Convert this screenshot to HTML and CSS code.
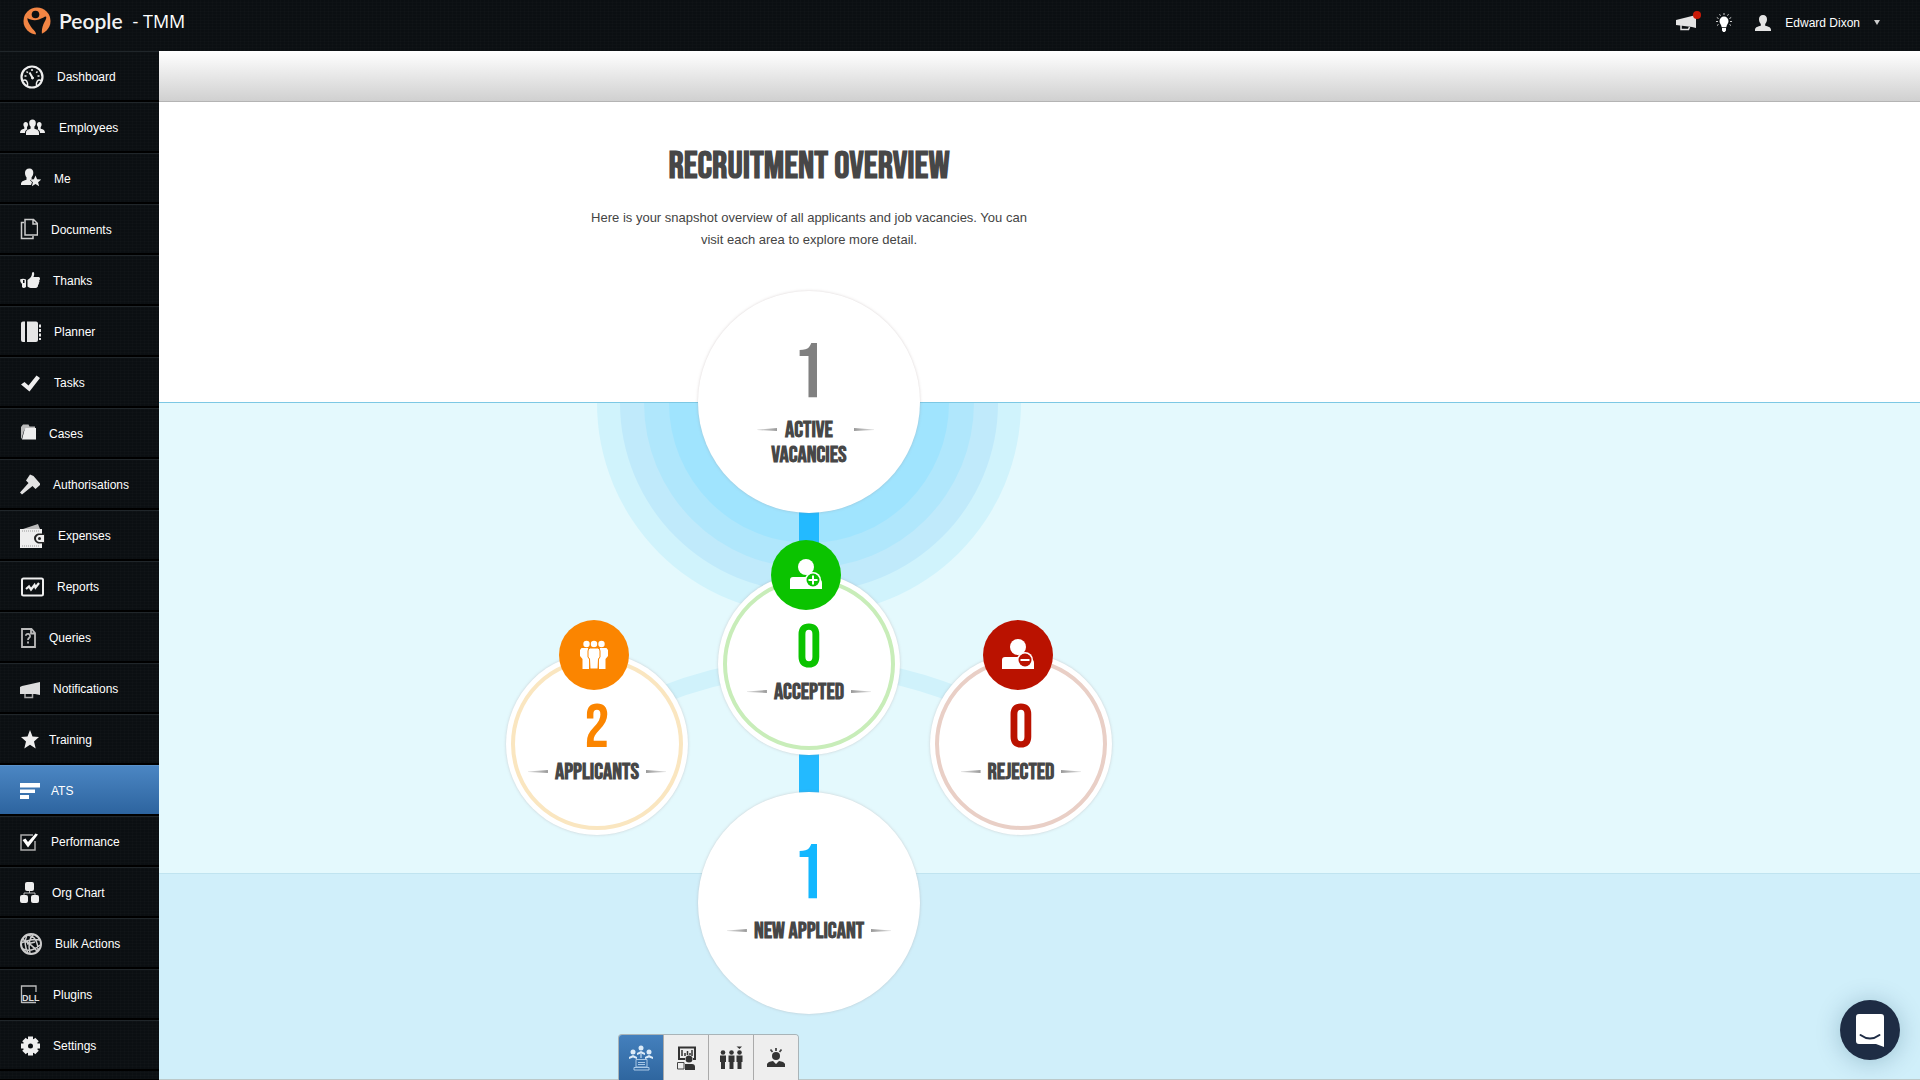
FILE: index.html
```html
<!DOCTYPE html>
<html lang="en">
<head>
    <meta charset="UTF-8">
    <meta name="viewport" content="width=device-width, initial-scale=1.0">
    <title>Recruitment Overview</title>
    <link rel="stylesheet" href="styles.css">
</head>
<body>

    <header class="topbar">
        <a class="brand" href="#">
            <svg width="28" height="28" viewBox="0 0 28 28"><circle cx="14" cy="14" r="13.5" fill="#f28544"/><circle cx="12.5" cy="7.5" r="3.8" fill="#0c1013"/><path d="M4.500 11C7 13 12 14 16 12.500C19 11.500 21.500 9.500 23 9.500C24 11 22 14 20.500 17C19 20.500 18.500 24 19 28H13C13.500 24.500 9.500 22.500 7.500 19C6 16 4 14 4.500 11Z" fill="#0c1013"/></svg>
            <span class="brand-name">People</span>
            <span class="brand-company">- TMM</span>
        </a>
        <div class="user-menu">
            <button class="icon-button" aria-label="Announcements">
                <svg width="20" height="18" viewBox="0 0 20 18" fill="#e4e4e4"><path d="M0 6L18 1.500L20 1V14L16 13L0 11Z"/><path d="M5 11V15.500H12.500L13.500 13" fill="none" stroke="#e4e4e4" stroke-width="1.500"/></svg>
                <span class="alert-dot"></span>
            </button>
            <button class="icon-button bulb" aria-label="Tips">
                <svg width="16" height="20" viewBox="0 0 16 20" fill="#fff"><path d="M8 3.500a4.500 4.500 0 0 1 4.500 4.700c0 2.300-1.800 3.200-2.200 6H5.700c-.4-2.800-2.200-3.700-2.200-6A4.500 4.500 0 0 1 8 3.500ZM6 15h4v2.500L8.800 19H7.200L6 17.500Z"/><path d="M8 0v2M3.500 1.200l1 1.500M12.500 1.200l-1 1.500M.8 4.500l1.800 1M15.200 4.500l-1.800 1M0 8.500h2M14 8.500h2M1 12.500l1.500-1M15 12.500l-1.500-1" stroke="#ccc" stroke-width="1"/></svg>
            </button>
            <button class="account">
                <svg width="16" height="16" viewBox="0 0 16 16" fill="#e4e4e4"><path d="M8 0c2.600 0 4 1.800 4 4.300 0 2-.8 3.800-1.800 4.700v1.800c2.800.8 5.800 1.500 5.800 4V16H0v-1.200c0-2.500 3-3.200 5.800-4V9C4.800 8.100 4 6.300 4 4.300 4 1.800 5.400 0 8 0Z"/></svg>
                Edward Dixon
                <svg class="caret" width="6" height="5" viewBox="0 0 6 5"><path d="M0 0H6L3 5Z" fill="#ccc"/></svg>
            </button>
        </div>
    </header>

    <div class="layout">
        <nav class="sidebar">
            <a href="#"><svg width="24" height="24" viewBox="0 0 24 24" fill="none" stroke="#eee"><circle cx="12" cy="12" r="10.500" stroke-width="2.200"/><path d="M3 15.500C6 14 8.500 17 7.500 21.500M21 15.500C18 14 15.500 17 16.500 21.500" stroke-width="1.500"/><path d="M4.500 11h2M17.500 11h2M6.500 6.500l1.300 1.300M17.500 6.500l-1.300 1.300M12 4v2" stroke-width="1.500"/><path d="M9.500 7.500L13 13.500" stroke-width="2"/><circle cx="12.500" cy="13" r="1" fill="#eee"/></svg>Dashboard</a>
            <a href="#"><svg width="26" height="24" viewBox="0 0 26 24" fill="#eee"><path d="M12.500 3.500c2.200 0 3.300 1.400 3.300 3.400 0 1.600-.6 3-1.400 3.700v2.200c2 .7 4.600 1 4.600 4.200v2H6v-2c0-3.200 2.600-3.500 4.600-4.200v-2.200C9.800 9.900 9.200 8.500 9.200 6.900c0-2 1.100-3.400 3.300-3.400Z"/><path d="M5.800 6c1.400 0 2.200 1 2.200 2.500 0 1.200-.4 2-1 2.600v1.600c.8.300 1 .4 1 .4-2 .7-3 2-3 3.900H0c0-3 1.500-3.700 4.300-4.300v-1.600c-.5-.6-.9-1.400-.9-2.600C3.400 7 4.300 6 5.800 6ZM19.200 6c-1.400 0-2.200 1-2.200 2.500 0 1.200.4 2 1 2.600v1.600c-.8.300-1 .4-1 .4 2 .7 3 2 3 3.900h5c0-3-1.500-3.700-4.300-4.300v-1.600c.5-.6.900-1.400.9-2.600C21.600 7 20.700 6 19.200 6Z"/></svg>Employees</a>
            <a href="#"><svg width="21" height="24" viewBox="0 0 21 24" fill="#eee"><path d="M9.500 1.500c2.500 0 3.800 1.700 3.800 4.200 0 1.800-.6 3.400-1.700 4.500v2l-1.600 1 2 2-1 2.800H1v-1c0-3 3.500-3.300 5.500-4.200v-2.600C5.500 9.300 5 7.600 5 5.700c0-2.500 1.500-4.200 4.500-4.200Z"/><path d="M15.500 8.500l1.600 3.800 4 .3-3 2.600 1 4-3.600-2.200-3.600 2.200 1-4-3-2.600 4-.3Z"/></svg>Me</a>
            <a href="#"><svg width="18" height="24" viewBox="0 0 18 24" fill="none" stroke="#ccc" stroke-width="1.500"><path d="M5 1.500h8.500l4 4V17H5ZM13 1.500V6h4.500M4 4.500H1.500V20.500H13V18"/></svg>Documents</a>
            <a href="#"><svg width="20" height="24" viewBox="0 0 20 24" fill="#eee"><path d="M12.800 3c1.800 0 1.700 2.700.7 5h4.700c1.200 0 1.800.7 1.800 1.700 0 .8-.3 1.300-.8 1.600.5.900.4 1.900-.4 2.500.3.900 0 1.800-.8 2.300.2 1.700-.7 2.900-2.500 2.900h-3.300c-2 0-3.200-.5-4.700-1.500V11C10.500 9 12.200 7 12 4Z"/><path fill-rule="evenodd" d="M0 10.500Q3 9 6 10.500V18Q3.500 20 2 18V15Q0 13 0 10.500ZM3 11v3h1.500V11Z"/></svg>Thanks</a>
            <a href="#"><svg width="21" height="24" viewBox="0 0 21 24" fill="#e6e6e6"><path d="M3 1.500H5V22H3Q1 22 1 20V3.500Q1 1.500 3 1.500ZM7 1.500H16Q18 1.500 18 3.500V20Q18 22 16 22H7ZM19 4.500h2v3h-2ZM19 9h2v3h-2ZM19 13.500h2v3h-2ZM19 18h2v2h-2Z"/></svg>Planner</a>
            <a href="#"><svg width="21" height="24" viewBox="0 0 21 24" fill="#eee"><path d="M1 13.500L4.500 11L8.500 14.500L16.500 4.500L20 7L9.500 20.500Z"/></svg>Tasks</a>
            <a href="#"><svg width="16" height="24" viewBox="0 0 16 24"><path d="M1 16V5L3 2.500H8.500L9.500 4.500H15V7H6Q4.500 7 4 8.500L1.500 17Z" fill="#bbb"/><path d="M6 6H16V17.500H2L4.500 8Q5 6 6 6Z" fill="#eee"/></svg>Cases</a>
            <a href="#"><svg width="20" height="24" viewBox="0 0 20 24" fill="#e2e2e2"><path d="M10 1.500L13.500 3L20 10.500V12L15.500 16L12.500 13L2 21.500L0 19.500L8.500 10L6 7.500Z"/></svg>Authorisations</a>
            <a href="#"><svg width="25" height="24" viewBox="0 0 25 24"><path d="M3 5L18 0L20 5Z" fill="#bbb"/><path d="M0 5H22V24H0Z" fill="#eee"/><path d="M2 7H20M2 22H20" stroke="#999" stroke-dasharray="1 1"/><path d="M25 9.500H18Q14 11 14 14Q14 17.500 18 19.500H25" fill="#222"/><path d="M24 11H19Q16 12 16 14.500Q16 17 19 18H24Z" fill="#eee"/><circle cx="19.500" cy="14.500" r="1.500" fill="#222"/></svg>Expenses</a>
            <a href="#"><svg width="24" height="24" viewBox="0 0 24 24" fill="none" stroke="#eee" stroke-width="2"><rect x="2" y="3.500" width="21" height="17" rx="1.500"/><path d="M6 14L9 11.500L11 14.500L14.500 10L15.500 12.500L19 8" stroke-width="2.200"/></svg>Reports</a>
            <a href="#"><svg width="16" height="24" viewBox="0 0 16 24" fill="none" stroke="#bbb" stroke-width="1.800"><path d="M2 3H11.500L15 7V21H2ZM11 3V7.500H15"/><path d="M5.800 9.800C6 7 10.500 7.500 10 10.500C9.700 12 8 12 8 14M8 15.500V17.500"/></svg>Queries</a>
            <a href="#"><svg width="20" height="24" viewBox="0 0 20 24" fill="#ddd"><path d="M0 10L2 9L20 5V18L15 17H0Z"/><path d="M5 17V20.500H12.500V17" fill="none" stroke="#aaa" stroke-width="1.500"/></svg>Notifications</a>
            <a href="#"><svg width="16" height="24" viewBox="0 0 16 24" overflow="visible" fill="#eee"><path d="M10 2L12.500 8.500L19 9L14 13.500L15.700 20.500L10 16.800L4.300 20.500L6 13.500L1 9L7.500 8.500Z"/></svg>Training</a>
            <a class="active" href="#"><svg width="18" height="24" viewBox="0 0 18 24" overflow="visible" fill="#fff"><path d="M0 4H20V8.500H0ZM0 10.500H15V14H0ZM0 16H9V20H0Z"/></svg>ATS</a>
            <a href="#"><svg width="18" height="24" viewBox="0 0 18 24" fill="none"><path d="M13 5H1V20H15V11" stroke="#aaa" stroke-width="1.500"/><path d="M2.500 10L5.500 8.500L8 12L15.500 3.500L18 4.500L8 17.500Z" fill="#fff"/></svg>Performance</a>
            <a href="#"><svg width="19" height="24" viewBox="0 0 19 24" fill="#eee"><rect x="5" y="1" width="9" height="9" rx="2"/><rect y="14" width="8" height="8" rx="2"/><rect x="11" y="14" width="8" height="8" rx="2"/><path d="M9.500 10V12M4 14V12H15V14" fill="none" stroke="#bbb"/></svg>Org Chart</a>
            <a href="#"><svg width="22" height="24" viewBox="0 0 22 24" fill="none" stroke="#ccc" stroke-width="1.500"><circle cx="11" cy="12" r="10" stroke-width="2"/><path d="M7 3Q3 12 8 21M7 3Q18 4 18 19M1 11Q12 6 20 8M3 17Q11 21 20 13M14 2Q7 7 10 21M2 7Q10 11 17 19M7 12L15 10"/></svg>Bulk Actions</a>
            <a href="#"><svg width="20" height="24" viewBox="0 0 20 24" fill="none"><path d="M1.500 20V3H16V9M1.500 19.500H16" stroke="#bbb" stroke-width="1.300"/><text x="2" y="18" font-size="9" font-weight="700" fill="#ddd">DLL</text></svg>Plugins</a>
            <a href="#"><svg width="20" height="24" viewBox="0 0 20 24" fill="none" stroke="#eee"><circle cx="10.500" cy="12" r="5" stroke-width="5"/><path d="M10.500 2.500V5M10.500 19V21.500M1 12H4M17 12H20M4 5.500L6 7.500M17 5.500L15 7.500M4 18.500L6 16.500M17 18.500L15 16.500" stroke-width="5"/></svg>Settings</a>
        </nav>

        <main class="content">
            <div class="toolbar"></div>

            <div class="overview">
                <section class="intro">
                    <div class="intro-text">
                        <h1>Recruitment Overview</h1>
                        <p>Here is your snapshot overview of all applicants and job vacancies. You can visit each area to explore more detail.</p>
                    </div>
                </section>
                <div class="band-light"></div>
                <div class="band-dark"></div>

                <div class="diagram">
                    <!-- ripples and connectors behind the circles -->
                    <svg class="links" width="700" height="730" viewBox="0 0 700 730">
                        <path d="M138 113a212 212 0 0 0 424 0Z" fill="#d0f3fc"/>
                        <path d="M161 113a189 189 0 0 0 378 0Z" fill="#c0eafb"/>
                        <path d="M185 113a165 165 0 0 0 330 0Z" fill="#b0e7fc"/>
                        <path d="M210 113a140 140 0 0 0 280 0Z" fill="#a0e4fe"/>
                        <path d="M200 406Q350 346 500 406" fill="none" stroke="#d0f2fb" stroke-width="17"/>
                        <path d="M350 200V520" stroke="#23baff" stroke-width="20"/>
                    </svg>

                    <a class="circle large vacancies" href="#">
                        <span class="count">1</span>
                        <span class="label wide">Active<br>Vacancies</span>
                    </a>
                    <a class="circle accepted" href="#">
                        <span class="badge"><svg width="34" height="34" viewBox="0 0 34 34" fill="#fff"><circle cx="17" cy="9" r="8"/><path d="M1 31V22Q1 19 4 19H24L32 22Q33 23 33 25V31Z"/><circle cx="24" cy="22" r="8"/><circle cx="24" cy="22" r="6.500" fill="#0bc300"/><path d="M24 17.500V26.500M19.500 22H28.500" stroke="#fff" stroke-width="2"/></svg></span>
                        <span class="count">0</span>
                        <span class="label">Accepted</span>
                    </a>
                    <a class="circle applicants" href="#">
                        <span class="badge"><svg width="34" height="34" viewBox="0 0 34 34" fill="#fff"><circle cx="9.500" cy="6" r="3.200"/><circle cx="17" cy="6" r="3.200"/><circle cx="24.500" cy="6" r="3.200"/><path d="M4.500 10H11V17L12 21V31H5.500V21L3 18V12ZM29.500 10H23V17L22 21V31H28.500V21L31 18V12Z"/><path d="M13.500 10H20.500Q23 10 23 13V19L21.500 21L21 31H13L12.500 21L11 19V13Q11 10 13.500 10Z" stroke="#fb8500" stroke-width="1"/></svg></span>
                        <span class="count">2</span>
                        <span class="label">Applicants</span>
                    </a>
                    <a class="circle rejected" href="#">
                        <span class="badge"><svg width="34" height="34" viewBox="0 0 34 34" fill="#fff"><circle cx="17" cy="9" r="8"/><path d="M1 31V22Q1 19 4 19H24L32 22Q33 23 33 25V31Z"/><circle cx="24" cy="22" r="8"/><circle cx="24" cy="22" r="6.500" fill="#ba1200"/><path d="M19.500 22H28.500" stroke="#fff" stroke-width="2"/></svg></span>
                        <span class="count">0</span>
                        <span class="label">Rejected</span>
                    </a>
                    <a class="circle large new-applicant" href="#">
                        <span class="count">1</span>
                        <span class="label">New Applicant</span>
                    </a>
                </div>

                <div class="tabs">
                    <button class="selected" aria-label="Overview"><svg width="24" height="26" viewBox="0 0 24 26" fill="#dcebf8"><circle cx="12" cy="3" r="2.500"/><circle cx="4" cy="7" r="2.500"/><circle cx="20" cy="7" r="2.500"/><path d="M8 10V8L12 6L16 8V10L12 8.500ZM0 14V12L4 10L8 12V14L4 12.500ZM16 14V12L20 10L24 12V14L20 12.500ZM11.500 9h1v4h-1Z"/><path d="M7 14.500H18V22H7ZM5 22.500H20V25H5Z" fill="none" stroke="#a9c8e6"/><path d="M9 17.500H16M9 19.500H16" stroke="#a9c8e6"/></svg></button>
                    <button aria-label="Vacancies"><svg width="20" height="26" viewBox="0 0 20 26" fill="#333"><path d="M9 14H3V2.500H19V14H17" fill="none" stroke="#333" stroke-width="2"/><path d="M6 5V11M9 8V11M11.500 6V10M14 8V10M16 5V11" stroke="#333" stroke-width="1.500"/><circle cx="13" cy="14" r="3.500"/><path d="M9 25V19H16Q19 19 19 22V25Z"/><path d="M1.500 17.500H8V24H1.500Z" fill="none" stroke="#444"/></svg></button>
                    <button aria-label="Applicants"><svg width="24" height="26" viewBox="0 0 24 26" fill="#333"><circle cx="4" cy="7.500" r="2.300"/><circle cx="12.500" cy="7.500" r="2.300"/><circle cx="20.500" cy="7.500" r="2.300"/><path d="M1 10.500H7V17H6V24H2V17H1ZM9.500 10.500H15.500V17H14.500V24H10.500V17H9.500ZM17.500 10.500H23.500V17H22.500V24H18.500V17H17.500ZM17.500 1.500H23L20.500 4Z"/></svg></button>
                    <button aria-label="Talent"><svg width="20" height="26" viewBox="0 0 20 26" fill="#333"><circle cx="10" cy="11" r="4"/><path d="M1 22V19Q2 16.500 7 16L10 19L13 16Q18 16.500 19 19V22Z"/><path d="M10 6V3M6.500 7L4.500 4.500M13.500 7L15.500 4.500" stroke="#444" stroke-width="1.800"/></svg></button>
                </div>
            </div>
        </main>
    </div>

    <button class="chat" aria-label="Open chat">
        <svg width="28" height="33" viewBox="0 0 28 33"><path d="M3 0H25Q28 0 28 3V33L20 30H3Q0 30 0 27V3Q0 0 3 0Z" fill="#fff"/><path d="M4.500 21Q14 28 23.500 21" fill="none" stroke="#1e2c44" stroke-width="2" stroke-linecap="round"/></svg>
    </button>

</body>
</html>
```
FILE: styles.css
```css
* { box-sizing: border-box; }
body { margin: 0; min-height: 100vh; display: flex; flex-direction: column; font-family: Helvetica, "Liberation Sans", Arial, sans-serif; font-size: 12px; color: #444; background: #fff; }
a { color: inherit; text-decoration: none; }
button { font: inherit; color: inherit; background: none; border: 0; padding: 0; cursor: pointer; }
svg { display: block; flex: none; }

.topbar, .sidebar {
    background-color: #0b0f12;
    background-image: repeating-linear-gradient(90deg, rgba(255,255,255,.01) 0 1px, transparent 1px 4px), repeating-linear-gradient(0deg, rgba(255,255,255,.01) 0 1px, transparent 1px 3px);
    color: #fff;
}

.topbar { height: 51px; padding: 0 40px 6px 23px; display: flex; justify-content: space-between; align-items: center; }
.brand { display: flex; align-items: center; height: 28px; padding-bottom: 4px; }
.brand svg { margin-right: 8px; }
.brand-name { font: 600 21px Lato, sans-serif; margin-right: 10px; color: #f2f2f2; }
.brand-company { font: 18px "Open Sans", sans-serif; }
.user-menu { display: flex; align-items: center; }
.icon-button { position: relative; margin-right: 20px; }
.bulb { margin-right: 23px; }
.alert-dot { position: absolute; top: -3px; right: -5px; width: 8px; height: 8px; border-radius: 50%; background: #c91a08; }
.account { display: flex; align-items: center; gap: 14px; }

.layout { flex: 1; display: flex; }
.sidebar { width: 159px; flex: none; border-bottom: 1px solid #000; }
.sidebar a { display: flex; align-items: center; gap: 13px; height: 51px; padding: 1px 0 0 20px; border-top: 1px solid #20262a; border-bottom: 2px solid #000; }
.sidebar a.active { background: linear-gradient(#4b86c3, #2d649f); border-top-color: #5a91c9; }

.content { flex: 1; display: flex; flex-direction: column; }
.toolbar { height: 51px; background: linear-gradient(#fff, #d0d0d0); border-bottom: 1px solid #b4b4b4; }
.overview { position: relative; flex: 1; display: flex; flex-direction: column; }
.intro { height: 301px; border-bottom: 1px solid #7cc8e4; }
.intro-text { max-width: 1300px; padding-top: 42px; text-align: center; }
h1 { margin: 0; font: bold 38px/46px "Bebas Neue", "Liberation Sans Narrow", "DejaVu Sans Condensed", sans-serif; text-transform: uppercase; color: #474747; }
.intro p { width: 460px; margin: 17px auto 0; font-size: 13px; line-height: 22px; }
.band-light { height: 470px; background: #e4f9fd; }
.band-dark { flex: 1; background: #d0effa; border-top: 1px solid #c0e4f0; border-bottom: 1px solid #bcc8c8; }

/* diagram */
.diagram { position: absolute; top: 188px; left: 300px; width: 700px; height: 730px; }
.links { position: absolute; top: 0; left: 0; }
.circle { position: absolute; width: 182px; height: 182px; border-radius: 50%; background: #fff; box-shadow: 0 0 3px rgba(150,130,130,.35); display: flex; flex-direction: column; align-items: center; padding-top: 46px; }
.circle::before { content: ""; position: absolute; inset: 5px; border: 4px solid; border-radius: 50%; }
.circle.large { width: 222px; height: 222px; padding-top: 45px; }
.circle.large::before { display: none; }
.vacancies { top: 1px; left: 239px; }
.accepted { top: 283px; left: 259px; }
.applicants { top: 363px; left: 47px; }
.rejected { top: 363px; left: 471px; }
.new-applicant { top: 502px; left: 239px; }
.accepted::before { border-color: #c8edb9; }
.applicants::before { border-color: #fae6c0; }
.rejected::before { border-color: #e9cfc6; }

.badge { position: absolute; top: -33px; left: 53px; width: 70px; height: 70px; border-radius: 50%; display: flex; align-items: center; justify-content: center; }
.accepted .badge { background: #0bc300; }
.applicants .badge { background: #fb8500; }
.rejected .badge { background: #ba1200; }

.count { font: 62px/60px "Bebas Neue", "Liberation Sans Narrow", "DejaVu Sans Condensed", sans-serif; }
.large .count { font-size: 77px; line-height: 76px; }
.vacancies .count { color: #808080; }
.accepted .count { color: #0bc300; }
.applicants .count { color: #fb8500; }
.rejected .count { color: #ba1200; }
.new-applicant .count { color: #12b7ff; }

.label { position: relative; margin-top: 1px; font: bold 23px/25px "Bebas Neue", "Liberation Sans Narrow", "DejaVu Sans Condensed", sans-serif; text-transform: uppercase; text-align: center; color: #474747; }
.large .label { margin-top: 6px; }
.label::before, .label::after { content: ""; position: absolute; top: 10px; width: 20px; height: 3px; background: linear-gradient(90deg, #ddd, #999); clip-path: polygon(0 50%, 100% 0, 100% 100%, 0 70%); }
.label::before { left: -27px; }
.label::after { right: -27px; transform: scaleX(-1); }
.label.wide::before { left: -14px; }

.tabs { position: absolute; left: 459px; bottom: 0; display: flex; border: 1px solid #a9b4b8; border-bottom: 0; border-radius: 4px 4px 0 0; overflow: hidden; }
.tabs button { width: 45px; height: 45px; background: #eee; border-left: 1px solid #aaa; display: flex; align-items: center; justify-content: center; }
.tabs .selected { width: 44px; background: linear-gradient(#4480bd, #2f669f); border-left: 0; }

.chat { position: fixed; right: 20px; bottom: 20px; width: 60px; height: 60px; border-radius: 50%; background: #1e2c44; display: flex; align-items: center; justify-content: center; box-shadow: 0 2px 24px rgba(0,60,90,.25); }
```
